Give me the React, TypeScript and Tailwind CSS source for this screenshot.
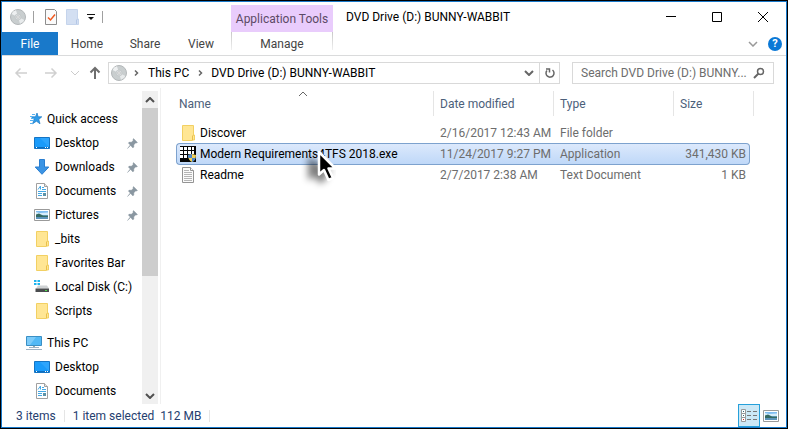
import React from "react";

type IconProps = { className?: string };

function Disc({ className = "" }: IconProps) {
  return (
    <svg viewBox="0 0 16 16" className={`size-4 shrink-0 ${className}`} aria-hidden="true">
      <circle cx="8" cy="8" r="7.5" fill="#c9cecf" stroke="#b3b7b9" />
      <path d="M8 8 1.500 5A7 7 0 0 1 6 1.300z" fill="#eef0f1" />
      <path d="M8 8l6.500 3A7 7 0 0 1 10 14.700z" fill="#e8ebec" />
      <circle cx="8" cy="8" r="3" fill="#d9dddf" stroke="#c0c4c6" strokeWidth=".7" />
      <circle cx="8" cy="8" r="1.2" fill="#fff" stroke="#aaa" strokeWidth=".6" />
    </svg>
  );
}

function Folder({ className = "" }: IconProps) {
  return (
    <svg viewBox="0 0 16 16" className={`size-4 shrink-0 ${className}`} aria-hidden="true">
      <path d="M2.5.5h11v9.500h1v5h-2v.5h-10z" fill="#ffe694" stroke="#f2d063" />
      <path d="M12.500 15v-4l1-1" fill="none" stroke="#e9c04a" />
    </svg>
  );
}

function DesktopIcon() {
  return (
    <svg viewBox="0 0 16 16" className="size-4 shrink-0" aria-hidden="true">
      <path d="M.5 2.500h15v11H.5z" fill="#1a9bfa" stroke="#1474c4" />
      <path d="M15 3v9L6 3z" fill="#3fb0ff" opacity=".5" />
      <path d="M1 12.500h14" stroke="#0c6ebf" />
      <path d="M2 12.500h1M11 12.500h1M13 12.500h1" stroke="#fff" />
    </svg>
  );
}

function DownloadIcon() {
  return (
    <svg viewBox="0 0 16 16" className="size-4 shrink-0" aria-hidden="true">
      <path d="M5.500.5h5V8h4.300L8 15.300 1.200 8h4.300z" fill="#3b94e4" stroke="#2a7ed0" />
    </svg>
  );
}

function DocumentIcon() {
  return (
    <svg viewBox="0 0 16 16" className="size-4 shrink-0" aria-hidden="true">
      <path d="M2.500.5h8l3 3v12h-11z" fill="#fff" stroke="#a0a0a0" />
      <path d="M10.500.5v3h3" fill="#e4e4e4" stroke="#a0a0a0" />
      <path d="M4 6.500 6.500 3v3.500M8 4.500h2M8 6.500h4M4 8.500h8M4 10.500h4M4 12.500h4" fill="none" stroke="#45a8e4" />
      <path d="M9 10h3v3H9z" fill="#5c93a8" />
    </svg>
  );
}

function PictureIcon({ className = "" }: IconProps) {
  return (
    <svg viewBox="0 0 16 16" className={`size-4 shrink-0 ${className}`} aria-hidden="true">
      <path d="M.5 2.500h15v11H.5z" fill="#fff" stroke="#9a9a9a" />
      <path d="M2 4h12v8H2z" fill="#7fbdf2" />
      <path d="M2 5l4 1 8-.5V8H2z" fill="#d5ecfb" />
      <path d="M2 7.500l3-1 4 2h5V10H2z" fill="#356a62" />
      <path d="M2 10h12v2H2z" fill="#5c93ba" />
    </svg>
  );
}

function DriveIcon() {
  return (
    <svg viewBox="0 0 16 16" className="size-4 shrink-0" aria-hidden="true">
      <path d="M0 1h2.500v2H0zM3.500 1H6v2H3.500zM0 4h2.500v2H0zM3.500 4H6v2H3.500z" fill="#1db4ee" />
      <path d="M4 6.500h9l2 3H2z" fill="#cfd2d4" />
      <path d="M1.500 9.500H15V13H1.500z" fill="#4a4d4f" />
      <path d="M11 11.500h2" stroke="#4ee04a" />
    </svg>
  );
}

function StarIcon() {
  return (
    <svg viewBox="0 0 16 16" className="size-4 shrink-0" aria-hidden="true">
      <path d="M11 2l1.200 3.800h3.600l-3 2.600 1.200 4.400-3.600-2.600-3.800 2.600 1.400-4.300L5.500 5.800h4z" fill="#2f9be8" stroke="#1b79c4" strokeWidth=".7" />
      <path d="M4 5.500h3M5 7.500h3M4 9.500h4M4 12.500h3M6 3.500h3" stroke="#5ab2f0" />
    </svg>
  );
}

function ComputerIcon() {
  return (
    <svg viewBox="0 0 16 16" className="size-4 shrink-0" aria-hidden="true">
      <path d="M.5 1.500h15v9H.5z" fill="#53b9f5" stroke="#3a8fc4" />
      <path d="M1 2h9L4 10H1z" fill="#8ed3fb" opacity=".7" />
      <path d="M7 11h2v1H7z" fill="#9aa" />
      <path d="M3 12.500h10M0 14.500h16" stroke="#9fb3c4" />
    </svg>
  );
}

function Pin() {
  return (
    <svg viewBox="0 0 11 11" className="size-[11px] shrink-0" aria-hidden="true">
      <path d="M6.500.5l4 4-1.200.6-.8-.1-1.700 1.900.1 2-1 1L3.600 7.500.5 10.500 3.200 7 1.300 5.100l1-1 2 .1L6.200 2.500 6 1.500z" fill="#8a97a1" stroke="#8a97a1" strokeWidth=".4" />
    </svg>
  );
}

function AppIcon() {
  return (
    <svg viewBox="0 0 16 16" className="size-4 shrink-0" aria-hidden="true">
      <path d="M0 0h16v16H0z" fill="#050505" />
      <path d="M0 1h3v3H0zM4 1h3v3H4zM8 1h3v3H8zM12 1h2v3h-2zM0 5h3v3H0zM4 5h3v3H4zM8 5h3v3H8zM12 5h2v3h-2zM0 9h3v3H0zM4 9h3v3H4z" fill="#fff" />
      <path d="M12 8l4 1c0 3.500-1.500 6-4 7-2.500-1-4-3.500-4-7z" fill="#f0cf58" />
      <path d="M12 8v4H8.500C8 11 8 10 8 9zM12 12h3.500c-.6 2-1.700 3.400-3.500 4z" fill="#4d86cc" />
    </svg>
  );
}

function TextFileIcon() {
  return (
    <svg viewBox="0 0 16 16" className="size-4 shrink-0" aria-hidden="true">
      <path d="M2.500.5h8l3 3v12h-11z" fill="#fbfbfb" stroke="#949494" />
      <path d="M10.500.5v3h3" fill="#fff" stroke="#949494" />
      <path d="M4 3.500h5M4 5.500h8M4 7.500h8M4 9.500h8M4 11.500h8M4 13.500h8" stroke="#b5b5b5" />
    </svg>
  );
}

function Chevron({ className = "", d = "M1 1l4 4 4-4" }: { className?: string; d?: string }) {
  return (
    <svg viewBox="0 0 10 6" className={`h-1.5 w-2.5 shrink-0 ${className}`} fill="none" stroke="currentColor" aria-hidden="true">
      <path d={d} />
    </svg>
  );
}

function Crumb() {
  return (
    <svg viewBox="0 0 6 8" className="h-2 w-1.5 shrink-0 text-[#666]" fill="none" stroke="currentColor" strokeWidth="1.500" aria-hidden="true">
      <path d="M1 1.500L3.500 4 1 6.500" />
    </svg>
  );
}

function Arrow({ className = "" }: IconProps) {
  return (
    <svg viewBox="0 0 14 14" className={`size-3.5 shrink-0 ${className}`} fill="none" stroke="currentColor" aria-hidden="true">
      <path d="M13 7H2M6.500 2.500L2 7l4.500 4.500" />
    </svg>
  );
}

type NavItem = { label: string; icon: React.ReactNode; pinned?: boolean };

const quickAccess: NavItem[] = [
  { label: "Desktop", icon: <DesktopIcon />, pinned: true },
  { label: "Downloads", icon: <DownloadIcon />, pinned: true },
  { label: "Documents", icon: <DocumentIcon />, pinned: true },
  { label: "Pictures", icon: <PictureIcon />, pinned: true },
  { label: "_bits", icon: <Folder /> },
  { label: "Favorites Bar", icon: <Folder /> },
  { label: "Local Disk (C:)", icon: <DriveIcon /> },
  { label: "Scripts", icon: <Folder /> },
];

const thisPc: NavItem[] = [
  { label: "Desktop", icon: <DesktopIcon /> },
  { label: "Documents", icon: <DocumentIcon /> },
];

function NavGroup({ title, icon, items }: { title: string; icon: React.ReactNode; items: NavItem[] }) {
  return (
    <section>
      <a href="#" className="flex h-6 items-center gap-[5px] pl-6">
        {icon}
        {title}
      </a>
      <ul>
        {items.map((item) => (
          <li key={item.label}>
            <a href="#" className="flex h-6 items-center gap-[5px] pr-1 pl-8">
              {item.icon}
              <span className="flex-1">{item.label}</span>
              {item.pinned && <Pin />}
            </a>
          </li>
        ))}
      </ul>
    </section>
  );
}

const files = [
  { name: "Discover", date: "2/16/2017 12:43 AM", type: "File folder", size: "", icon: <Folder />, selected: false },
  { name: "Modern Requirements4TFS 2018.exe", date: "11/24/2017 9:27 PM", type: "Application", size: "341,430 KB", icon: <AppIcon />, selected: true },
  { name: "Readme", date: "2/7/2017 2:38 AM", type: "Text Document", size: "1 KB", icon: <TextFileIcon />, selected: false },
];

const selectedCell = "border-y border-[#7da2ce] bg-linear-to-b from-[#dce9fc] to-[#bfd8f8]";

function Header() {
  return (
    <header className="flex h-[54px] shrink-0 border-b border-[#dadbdc]">
      <div className="flex w-[229px] flex-col">
        <div className="flex h-[30px] items-center pl-2">
          <Disc />
          <span className="ml-[7px] h-3 w-px bg-[#a0a0a0]" />
          <button aria-label="Properties" className="ml-[9px] flex">
            <svg viewBox="0 0 16 16" className="size-4" aria-hidden="true">
              <path d="M2.500.5h9l2 2v13h-11z" fill="#fafafa" stroke="#8d8d8d" />
              <path d="M5 8.500l2.500 2.500L12 5.500" fill="none" stroke="#f0581e" strokeWidth="1.500" />
            </svg>
          </button>
          <button aria-label="New folder" className="ml-[7px] flex">
            <svg viewBox="0 0 16 16" className="size-4" aria-hidden="true">
              <path d="M.5.5h11v9.500h1v5.500H.5z" fill="#d3dff2" stroke="#c5d4ec" />
              <path d="M10.500 15v-4l1-1" fill="none" stroke="#b4c7e6" />
            </svg>
          </button>
          <button aria-label="Customize Quick Access Toolbar" className="ml-[5px] flex">
            <svg viewBox="0 0 8 8" className="size-2" aria-hidden="true">
              <path d="M0 1.500h8" stroke="#111" />
              <path d="M1 4h6L4 7z" fill="#111" />
            </svg>
          </button>
          <span className="ml-[7px] h-3 w-px bg-[#a0a0a0]" />
        </div>
        <nav className="flex flex-1 text-[#444]">
          <button className="w-14 bg-[#1979ca] text-white">File</button>
          <button className="w-[58px]">Home</button>
          <button className="w-[58px]">Share</button>
          <button className="w-[54px]">View</button>
        </nav>
      </div>
      <div className="flex w-[102px] flex-col pt-[3px]">
        <div className="flex h-[27px] items-center justify-center bg-[#e9ccfc] text-[#5c4a66]">Application Tools</div>
        <button className="flex h-[23px] justify-between text-[#444]">
          <span className="h-[18px] w-px bg-linear-to-b from-[#c8c8c8] to-[#f0f0f0]" />
          <span className="self-center">Manage</span>
          <span className="h-[18px] w-px bg-linear-to-b from-[#c8c8c8] to-[#f0f0f0]" />
        </button>
      </div>
      <div className="flex flex-1 flex-col">
        <div className="flex h-[30px] items-center pl-[13px]">
          <h1 className="flex-1">DVD Drive (D:) BUNNY-WABBIT</h1>
          <button aria-label="Minimize" className="flex w-[46px] justify-center">
            <svg viewBox="0 0 10 10" className="size-2.5" stroke="#000" aria-hidden="true"><path d="M0 4.500h10" /></svg>
          </button>
          <button aria-label="Maximize" className="flex w-[46px] justify-center">
            <svg viewBox="0 0 10 10" className="size-2.5" fill="none" stroke="#000" aria-hidden="true"><path d="M.5.5h9v9h-9z" /></svg>
          </button>
          <button aria-label="Close" className="flex w-[46px] justify-center">
            <svg viewBox="0 0 10 10" className="size-2.5" stroke="#000" aria-hidden="true"><path d="M0 0l10 10M10 0L0 10" /></svg>
          </button>
        </div>
        <div className="flex flex-1 items-center justify-end gap-2.5 pr-1">
          <button aria-label="Expand ribbon" className="flex text-[#999]"><Chevron className="stroke-[1.5px]" /></button>
          <button aria-label="Help" className="flex size-3.5 items-center justify-center rounded-full bg-[#0a78d6] text-[11px] font-bold text-white">?</button>
        </div>
      </div>
    </header>
  );
}

function AddressRow() {
  return (
    <div className="flex h-8 shrink-0 items-center pt-0.5 pr-3 pl-3">
      <button aria-label="Back" className="flex text-[#d0d0d0]"><Arrow className="stroke-[1.5px]" /></button>
      <button aria-label="Forward" className="ml-4 flex text-[#d0d0d0]"><Arrow className="rotate-180 stroke-[1.5px]" /></button>
      <button aria-label="Recent locations" className="ml-3 flex text-[#ccc]"><Chevron /></button>
      <button aria-label="Up" className="ml-2 flex text-[#6e6e6e]"><Arrow className="rotate-90 stroke-2" /></button>
      <div className="ml-1.5 flex h-[22px] flex-1 items-center border border-[#d9d9d9] pl-0.5">
        <Disc />
        <span className="ml-[7px]"><Crumb /></span>
        <a href="#" className="ml-2">This PC</a>
        <span className="ml-[9px]"><Crumb /></span>
        <a href="#" className="ml-[7px] flex-1 whitespace-nowrap">DVD Drive (D:) BUNNY-WABBIT</a>
        <button aria-label="Previous locations" className="flex w-5 justify-center text-[#666]"><Chevron className="stroke-2" /></button>
        <button aria-label="Refresh" className="flex h-full w-5 items-center justify-center border-l border-[#d9d9d9]">
          <svg viewBox="0 0 12 12" className="size-3" fill="none" stroke="#666" strokeWidth="1.500" aria-hidden="true">
            <path d="M8.500 3A4 4 0 1 1 3 3.500" />
            <path d="M2 2h3.500v3.500" />
          </svg>
        </button>
      </div>
      <form className="ml-3 flex h-[22px] w-[202px] items-center border border-[#d9d9d9] pr-2 pl-2">
        <input aria-label="Search" placeholder="Search DVD Drive (D:) BUNNY..." className="min-w-0 flex-1 outline-none placeholder:text-[#6d6d6d]" />
        <button aria-label="Search" type="button" className="flex">
          <svg viewBox="0 0 12 12" className="size-3" fill="none" stroke="#666" aria-hidden="true">
            <circle cx="7.500" cy="4.500" r="3" strokeWidth="1.500" />
            <path d="M5.500 6.500L1 11" strokeWidth="2" />
          </svg>
        </button>
      </form>
    </div>
  );
}

function FileTable() {
  return (
    <div className="relative min-w-0 flex-1 overflow-hidden pt-[3px] pl-[15px]">
      <table className="w-[578px] table-fixed border-separate border-spacing-0">
        <colgroup>
          <col className="w-[258px]" />
          <col className="w-[120px]" />
          <col className="w-[120px]" />
          <col className="w-[76px]" />
          <col className="w-1" />
        </colgroup>
        <thead className="text-left text-[#4c607a]">
          <tr>
            <th className="h-8 p-0 align-top font-normal">
              <div className="relative flex h-[25px] items-center border-r border-[#e5e5e5] pl-[3px]">
                Name
                <Chevron className="absolute top-0 left-[122px] text-[#666]" d="M1 5l4-4 4 4" />
              </div>
            </th>
            <th className="p-0 align-top font-normal"><div className="flex h-[25px] items-center border-r border-[#e5e5e5] pl-1.5">Date modified</div></th>
            <th className="p-0 align-top font-normal"><div className="flex h-[25px] items-center border-r border-[#e5e5e5] pl-1.5">Type</div></th>
            <th colSpan={2} className="p-0 align-top font-normal"><div className="flex h-[25px] items-center border-r border-[#e5e5e5] pl-1.5">Size</div></th>
          </tr>
        </thead>
        <tbody className="whitespace-nowrap text-[#6d6d6d]">
          {files.map((f) => (
            <tr key={f.name} className={f.selected ? "h-[22px]" : "h-5"}>
              <td className={`p-0 text-black ${f.selected ? `${selectedCell} rounded-l-sm border-l pl-[3px]` : "pl-1"}`}>
                <div className="flex items-center gap-1">{f.icon}{f.name}</div>
              </td>
              <td className={`p-0 pl-1.5 ${f.selected ? selectedCell : ""}`}>{f.date}</td>
              <td className={`p-0 pl-1.5 ${f.selected ? selectedCell : ""}`}>{f.type}</td>
              <td className={`p-0 text-right ${f.selected ? `${selectedCell} rounded-r-sm border-r pr-[3px]` : "pr-1"}`}>{f.size}</td>
              <td className="p-0" />
            </tr>
          ))}
        </tbody>
      </table>
      <svg viewBox="0 0 50 54" className="pointer-events-none absolute top-[52px] left-[135px] h-[54px] w-[50px]" aria-hidden="true">
        <defs>
          <filter id="soft" x="-50%" y="-50%" width="200%" height="200%"><feGaussianBlur stdDeviation="3.500" /></filter>
        </defs>
        <path d="M14 20v17l6-3 4 7 5-3-3-8h5z" fill="#000" stroke="#000" strokeWidth="4" opacity=".5" filter="url(#soft)" />
        <path d="M23 12v22.500l5-4.500 4.500 10 4.500-2-4.500-9.500h7z" fill="#000" stroke="#fff" strokeWidth="2.500" strokeLinejoin="round" />
      </svg>
    </div>
  );
}

export default function App() {
  return (
    <div className="h-screen border border-black bg-white font-['Roboto','Noto_Sans',sans-serif] text-[12px] leading-4 text-black">
      <div className="flex h-full flex-col border border-[#1979ca]">
        <Header />
        <AddressRow />
        <main className="flex min-h-0 flex-1">
          <aside className="flex w-[159px] shrink-0 border-r border-[#f0f0f0]">
            <nav className="flex flex-1 flex-col gap-2 overflow-hidden pt-[19px] whitespace-nowrap">
              <NavGroup title="Quick access" icon={<StarIcon />} items={quickAccess} />
              <NavGroup title="This PC" icon={<ComputerIcon />} items={thisPc} />
            </nav>
            <div className="mt-[3px] mr-0.5 flex w-4 flex-col items-center bg-[#f0f0f0] text-[#505050]">
              <button aria-label="Scroll up" className="flex h-[17px] items-center"><Chevron className="stroke-2" d="M1 5l4-4 4 4" /></button>
              <div className="h-[168px] w-4 bg-[#cdcdcd]" />
              <button aria-label="Scroll down" className="mt-auto flex h-[17px] items-center"><Chevron className="stroke-2" /></button>
            </div>
          </aside>
          <FileTable />
        </main>
        <footer className="flex h-[23px] shrink-0 items-center pl-3.5 text-[#26406f]">
          <span>3 items</span>
          <span className="mx-2 h-3 w-px bg-[#e5e5e5]" />
          <span>1 item selected</span>
          <span className="ml-1.5">112 MB</span>
          <span className="ml-2 h-3 w-px bg-[#e5e5e5]" />
          <div className="ml-auto flex h-full items-center pr-[7px]">
            <button aria-label="Details view" className="flex h-full w-[22px] items-center justify-center border border-[#26a0da] bg-[#cce8f6]">
              <svg viewBox="0 0 16 14" className="h-3.5 w-4" aria-hidden="true">
                <path d="M.5.5h4v4h-4zM.5 4.500h4v4h-4zM.5 8.500h4v4h-4z" fill="#fff" stroke="#999" />
                <path d="M2 2.500h1M2 6.500h1" stroke="#367" />
                <path d="M2 10.500h1" stroke="#d22" />
                <path d="M6 2.500h4M12 2.500h4M6 6.500h4M12 6.500h4M6 10.500h4M12 10.500h4" stroke="#777" />
              </svg>
            </button>
            <button aria-label="Large icons view" className="ml-[3px] flex"><PictureIcon /></button>
          </div>
        </footer>
      </div>
    </div>
  );
}
